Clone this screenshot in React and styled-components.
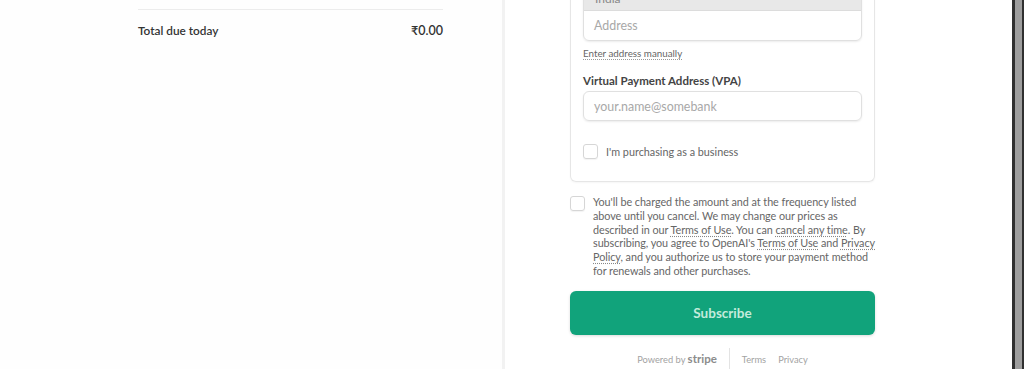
import styled, { createGlobalStyle } from "styled-components";

const GlobalStyle = createGlobalStyle`
  html, body {
    margin: 0;
    padding: 0;
    height: 100%;
    overflow: hidden;
  }
  body {
    font-family: Lato, "Open Sans", sans-serif;
    background: #ffffff;
    color: #333;
  }
`;

const Page = styled.div`
  display: flex;
  height: 369px;
  width: 1024px;
  overflow: hidden;
`;

const Summary = styled.div`
  width: 502px;
  background: #fefefe;
  padding: 9px 59px 0 138px;
  box-sizing: border-box;
`;

const Divider = styled.div`
  width: 3px;
  background: #f2f2f2;
`;

const TotalRow = styled.div`
  display: flex;
  justify-content: space-between;
  align-items: center;
  border-top: 1px solid #ececec;
  padding-top: 13px;
  font-size: 11.8px;
  font-weight: 600;
  color: #333;
`;

const Amount = styled.span`
  font-size: 12.5px;
`;

const Checkout = styled.div`
  flex: 1;
  background: #ffffff;
  padding-left: 65px;
  box-sizing: border-box;
`;

const Column = styled.div`
  width: 305px;
  margin-top: -40px;
  display: flex;
  flex-direction: column;
`;

const Card = styled.div`
  border: 1px solid #e6e6e6;
  border-top: none;
  border-radius: 0 0 6px 6px;
  padding: 0 12px 22px;
  box-shadow: 0 1px 2px rgba(0, 0, 0, 0.04);
`;

const FieldGroup = styled.div`
  border: 1px solid #e0e0e0;
  border-radius: 0 0 6px 6px;
  box-shadow: 0 1px 2px rgba(0, 0, 0, 0.08);
  overflow: hidden;
`;

const Select = styled.div`
  height: 50px;
  background: #e8e8e8;
  border-bottom: 1px solid #dcdcdc;
  display: flex;
  align-items: flex-end;
  padding: 0 11px 4px;
  box-sizing: border-box;
  font-size: 12px;
  color: #888;
`;

const Input = styled.div`
  height: ${(p) => p.$h || 29}px;
  display: flex;
  align-items: center;
  padding-left: 10px;
  font-size: 12.4px;
  color: #a8a8a8;
`;

const LinkText = styled.div`
  margin-top: 6px;
  font-size: 9.8px;
  color: #666;
  text-decoration: underline dotted #999;
  text-underline-offset: 2px;
`;

const Label = styled.div`
  margin-top: 15px;
  font-size: 11.5px;
  font-weight: 700;
  color: #444;
`;

const Box = styled.div`
  margin-top: 4px;
  border: 1px solid #e0e0e0;
  border-radius: 6px;
  box-shadow: 0 1px 2px rgba(0, 0, 0, 0.08);
`;

const CheckRow = styled.label`
  display: flex;
  align-items: ${(p) => (p.$top ? "flex-start" : "center")};
  gap: ${(p) => p.$gap || 9}px;
  margin-top: ${(p) => p.$mt || 0}px;
  font-size: ${(p) => p.$fs || 12}px;
  line-height: ${(p) => p.$lh || "normal"};
  color: #666;
`;

const Check = styled.span`
  flex: none;
  width: 13px;
  height: 13px;
  border: 1px solid #d6d6d6;
  border-radius: 3px;
  box-shadow: 0 1px 1px rgba(0, 0, 0, 0.05);
  margin-top: ${(p) => p.$mt || 0}px;
`;

const Legal = styled.span`
  white-space: nowrap;
  letter-spacing: -0.05px;
`;

const U = styled.span`
  text-decoration: underline dotted #888;
  text-underline-offset: 2px;
`;

const Button = styled.button`
  margin-top: 13px;
  height: 44px;
  border: none;
  border-radius: 6px;
  background: #11a37b;
  color: #c3ebdc;
  font-family: inherit;
  font-size: 13.5px;
  font-weight: 700;
  box-shadow: 0 1px 3px rgba(0, 0, 0, 0.15);
`;

const Footer = styled.div`
  display: flex;
  align-items: center;
  justify-content: center;
  gap: 12px;
  margin-top: 14px;
  height: 22px;
  font-size: 9.3px;
  color: #a3a3a3;
`;

const Powered = styled.span`
  padding-right: 12px;
  border-right: 1px solid #e3e3e3;
  line-height: 22px;
  b {
    font-size: 11.5px;
    color: #8c8c8c;
    font-weight: 700;
  }
`;

const Scrollbar = styled.div`
  width: 7px;
  border-left: 3px solid #303030;
  border-right: 2px solid #303030;
  background: #9e9e9e;
`;

export default function App() {
  return (
    <>
      <GlobalStyle />
      <Page>
        <Summary>
          <TotalRow>
            <span>Total due today</span>
            <Amount>₹0.00</Amount>
          </TotalRow>
        </Summary>
        <Divider />
        <Checkout>
          <Column>
            <Card>
              <FieldGroup>
                <Select>India</Select>
                <Input $h={29}>Address</Input>
              </FieldGroup>
              <LinkText>Enter address manually</LinkText>
              <Label>Virtual Payment Address (VPA)</Label>
              <Box>
                <Input $h={28}>your.name@somebank</Input>
              </Box>
              <CheckRow $mt={23} $fs={10.8} $gap={8}>
                <Check />
                <span>I'm purchasing as a business</span>
              </CheckRow>
            </Card>
            <CheckRow $top $mt={13} $fs={10.8} $lh="13.8px" $gap={8}>
              <Check $mt={1} />
              <Legal>
                You'll be charged the amount and at the frequency listed
                <br />
                above until you cancel. We may change our prices as
                <br />
                described in our <U>Terms of Use</U>. You can{" "}
                <U>cancel any time</U>. By
                <br />
                subscribing, you agree to OpenAI's <U>Terms of Use</U> and{" "}
                <U>Privacy</U>
                <br />
                <U>Policy</U>, and you authorize us to store your payment method
                <br />
                for renewals and other purchases.
              </Legal>
            </CheckRow>
            <Button>Subscribe</Button>
            <Footer>
              <Powered>
                Powered by <b>stripe</b>
              </Powered>
              <span>Terms</span>
              <span>Privacy</span>
            </Footer>
          </Column>
        </Checkout>
        <Scrollbar />
      </Page>
    </>
  );
}
